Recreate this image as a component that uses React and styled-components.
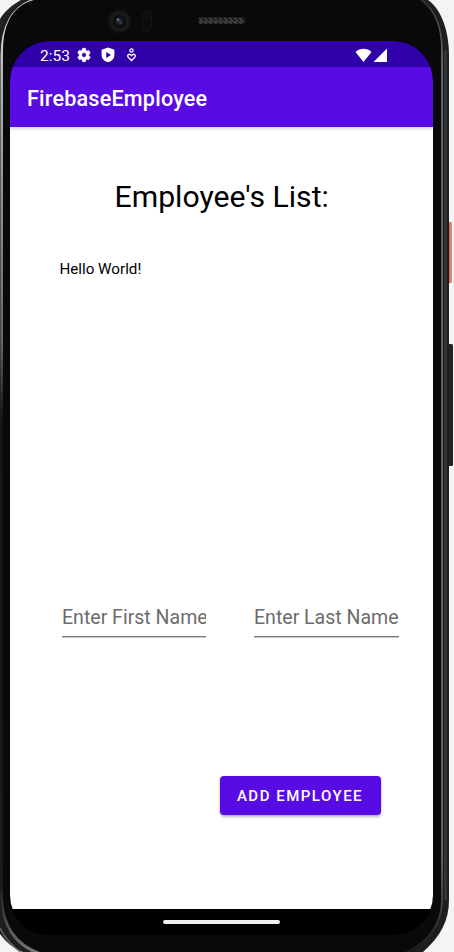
import React from "react";
import styled, { createGlobalStyle } from "styled-components";

const GlobalStyle = createGlobalStyle`
  * { box-sizing: border-box; }
  html, body { margin: 0; padding: 0; overflow: hidden; background: #f4f4f4; }
  body, button, input { font-family: Roboto, sans-serif; }
`;

const Device = styled.div`
  position: relative;
  isolation: isolate;
  width: 454px;
  height: 952px;
  overflow: hidden;
  padding: 41px 21px 0 10px;
`;

const Casing = styled.svg`
  position: absolute;
  inset: 0;
  z-index: -1;
`;

const Screen = styled.div`
  width: 423px;
  height: 894px;
  display: flex;
  flex-direction: column;
  border-radius: 40px;
  overflow: hidden;
  background: #000;
`;

const StatusBar = styled.header`
  height: 26px;
  flex: none;
  display: flex;
  align-items: center;
  justify-content: space-between;
  padding: 2px 46px 0 30px;
  background: #3000a9;
  color: #fff;
`;

const StatusGroup = styled.div`
  display: flex;
  align-items: center;
`;

const Clock = styled.span`
  width: 36px;
  padding-top: 1px;
  font-size: 15.5px;
  line-height: 20px;
`;

const StatusIcon = styled.svg`
  display: block;
  flex: none;
  fill: #fff;
  margin-right: ${({ $gap = 0 }) => $gap}px;
`;

const AppBar = styled.div`
  height: 60px;
  flex: none;
  display: flex;
  align-items: center;
  padding: 3px 17px 0;
  background: #580ce3;
  box-shadow: 0 1px 4px rgba(0, 0, 0, 0.24);
  z-index: 1;
`;

const AppTitle = styled.h1`
  margin: 0;
  font-size: 21.6px;
  line-height: 28px;
  letter-spacing: 0.2px;
  font-weight: 500;
  color: #fff;
`;

const Content = styled.main`
  flex: 1;
  display: flex;
  flex-direction: column;
  padding: 50px 0 0;
  background: #fff;
  color: #000;
`;

const Heading = styled.h2`
  margin: 0;
  padding-left: 104.5px;
  font-size: 30.2px;
  line-height: 40px;
  font-weight: 400;
`;

const Employees = styled.p`
  margin: 42px 0 0 49.4px;
  height: 332px;
  font-size: 15.2px;
  line-height: 20px;
`;

const Fields = styled.div`
  display: flex;
  gap: 48px;
  padding-left: 52px;
`;

const Field = styled.input`
  width: ${({ $width }) => $width}px;
  height: 46px;
  padding: 8px 0 0;
  border: 0;
  border-bottom: 1px solid #777;
  border-radius: 0;
  outline: 0;
  background: transparent;
  box-shadow: 0 1px 0 rgba(0, 0, 0, 0.2);
  font-size: 19.55px;
  color: #000;
  &::placeholder { color: #6c6c6c; opacity: 1; }
`;

const AddButton = styled.button`
  width: 161px;
  height: 39px;
  margin: 138.5px 0 0 209.5px;
  padding: 2px 0 0;
  border: 0;
  border-radius: 4px;
  background: #580ce3;
  box-shadow: 0 2px 3px rgba(0, 0, 0, 0.28), 0 0 2px rgba(0, 0, 0, 0.12);
  color: #fff;
  font-size: 15px;
  font-weight: 500;
  letter-spacing: 1.5px;
  white-space: nowrap;
`;

const NavigationBar = styled.footer`
  height: 26px;
  flex: none;
  display: flex;
  justify-content: center;
  padding-top: 11px;
  background: #000;
`;

const HomeHandle = styled.div`
  width: 117px;
  height: 4px;
  border-radius: 2px;
  background: #f1f0ee;
`;

function PhoneCasing() {
  return (
    <Casing width="454" height="952" viewBox="0 0 454 952" aria-hidden="true">
      <defs>
        <linearGradient id="leftRim" x1="0" y1="0" x2="0" y2="1">
          <stop offset="0" stopColor="#dedede" />
          <stop offset="0.08" stopColor="#b5b5b5" />
          <stop offset="0.25" stopColor="#858585" />
          <stop offset="0.36" stopColor="#666" />
          <stop offset="0.44" stopColor="#141214" />
          <stop offset="0.93" stopColor="#19191a" />
          <stop offset="1" stopColor="#777" />
        </linearGradient>
        <linearGradient id="rightRim" x1="0" y1="0" x2="0" y2="1">
          <stop offset="0" stopColor="#333" />
          <stop offset="0.07" stopColor="#777" />
          <stop offset="0.9" stopColor="#777" />
          <stop offset="1" stopColor="#181818" />
        </linearGradient>
        <pattern id="mesh" width="5" height="4" patternUnits="userSpaceOnUse">
          <path d="M0 1h3l2 2M0 3h2" stroke="#555" fill="none" />
        </pattern>
        <radialGradient id="lens">
          <stop offset="0" stopColor="#343a4c" />
          <stop offset="0.3" stopColor="#14161c" />
          <stop offset="0.5" stopColor="#0b0b0d" />
          <stop offset="0.65" stopColor="#1c1c1d" />
          <stop offset="1" stopColor="#121213" />
        </radialGradient>
      </defs>
      <rect x="448" y="222" width="4" height="61" rx="1" fill="#e68770" />
      <path d="M449.500 222v61" stroke="#c56c5c" />
      <rect x="447" y="344" width="6" height="122" rx="1.5" fill="#202224" />
      <path d="M21 0H428C442 10 449 32 449 56V900C449 921 440 937 423 952H23C13 948 5 941 0 934V19C5 11 12 5 21 0Z" fill="#1c1e20" />
      <path d="M35 0C12 6 2 28 2 56V895C2 926 16 945 38 953" fill="none" stroke="url(#leftRim)" strokeWidth="3" />
      <path d="M24 0C10 7 4 15 0 28" fill="none" stroke="#242426" strokeWidth="2" />
      <path d="M0 928C5 939 12 946 22 953" fill="none" stroke="#666" strokeWidth="1.5" />
      <path d="M422 0C435 10 442 28 442 52V900C442 923 430 940 410 952" fill="none" stroke="url(#rightRim)" strokeWidth="1.5" />
      <path d="M445.500 50V900" stroke="#303538" strokeWidth="3" />
      <path d="M34 0H419C433 9 441 26 441 51V897C441 923 428 941 405 952H42C15 943 3 923 3 895V51C3 22 14 5 34 0Z" fill="#09080a" />
      <rect x="10" y="41" width="423" height="894" rx="39" fill="#000" />
      <circle cx="119.500" cy="21.500" r="11.500" fill="url(#lens)" />
      <circle cx="118" cy="19.500" r="1.300" fill="#66718f" />
      <circle cx="121" cy="23" r="1" fill="#39405a" />
      <rect x="142.500" y="10.500" width="9" height="21" rx="4.500" fill="#0b0b0c" stroke="#141415" />
      <circle cx="147" cy="15" r="3" fill="#0c0c0d" stroke="#131314" />
      <circle cx="147" cy="27" r="3" fill="#0c0c0d" stroke="#131314" />
      <rect x="198" y="17" width="47" height="7" rx="2" fill="#1c1c1c" />
      <rect x="199" y="18" width="45" height="6" rx="1" fill="url(#mesh)" />
    </Casing>
  );
}

export default function App() {
  return (
    <>
      <GlobalStyle />
      <Device>
        <PhoneCasing />
        <Screen>
          <StatusBar>
            <StatusGroup>
              <Clock>2:53</Clock>
              <StatusIcon $gap={8} width="16" height="16" viewBox="0 0 24 24">
                <path d="M19.140 12.940c.04-.3.060-.61.060-.94s-.02-.64-.07-.94l2.030-1.580a.49.49 0 0 0 .12-.61l-1.920-3.320a.49.49 0 0 0-.59-.22l-2.390.96a7 7 0 0 0-1.620-.94l-.36-2.540A.48.48 0 0 0 13.920 2h-3.840a.48.48 0 0 0-.48.410l-.36 2.540c-.59.24-1.130.57-1.620.94l-2.390-.96a.48.48 0 0 0-.59.22L2.720 8.470a.48.48 0 0 0 .12.610l2.030 1.580a6 6 0 0 0 0 2.680l-2.030 1.580a.49.49 0 0 0-.12.610l1.920 3.320c.12.220.37.290.59.220l2.390-.96c.5.380 1.030.7 1.620.94l.36 2.540c.05.240.24.410.48.410h3.840c.24 0 .44-.17.470-.41l.36-2.540c.59-.24 1.130-.56 1.620-.94l2.390.96c.22.080.47 0 .59-.22l1.920-3.320a.49.49 0 0 0-.12-.61ZM12 15.600a3.600 3.600 0 1 1 0-7.200 3.600 3.600 0 0 1 0 7.200Z" stroke="#fff" />
              </StatusIcon>
              <StatusIcon $gap={9} width="16" height="16" viewBox="0 0 16 16">
                <path fillRule="evenodd" d="m8 .5 6.400 2.300V8c0 3.700-2.600 6.200-6.400 7.300C4.200 14.200 1.600 11.700 1.600 8V2.800ZM6.200 5v6L11 8Z" />
              </StatusIcon>
              <StatusIcon width="14" height="16" viewBox="0 0 14 16">
                <g fill="none" stroke="#fff" strokeWidth="1.300">
                  <circle cx="6.500" cy="3.500" r="1.600" />
                  <path d="M6.500 13.500 3.200 10.200C1.500 8.200 4.200 5.800 6.500 8.700 8.800 5.800 11.500 8.200 9.800 10.200Z" />
                </g>
              </StatusIcon>
            </StatusGroup>
            <StatusGroup>
              <StatusIcon $gap={1} width="17" height="15" viewBox="0 0 17 15">
                <path d="M.5 4C5 -.3 12 -.3 16.500 4L8.500 14Z" />
              </StatusIcon>
              <StatusIcon width="14" height="15" viewBox="0 0 14 15">
                <path d="M.5 14H14V.5Z" />
              </StatusIcon>
            </StatusGroup>
          </StatusBar>
          <AppBar>
            <AppTitle>FirebaseEmployee</AppTitle>
          </AppBar>
          <Content>
            <Heading>Employee's List:</Heading>
            <Employees>Hello World!</Employees>
            <Fields>
              <Field $width={144} placeholder="Enter First Name" aria-label="First name" />
              <Field $width={145} placeholder="Enter Last Name" aria-label="Last name" />
            </Fields>
            <AddButton type="button">ADD EMPLOYEE</AddButton>
          </Content>
          <NavigationBar>
            <HomeHandle />
          </NavigationBar>
        </Screen>
      </Device>
    </>
  );
}
